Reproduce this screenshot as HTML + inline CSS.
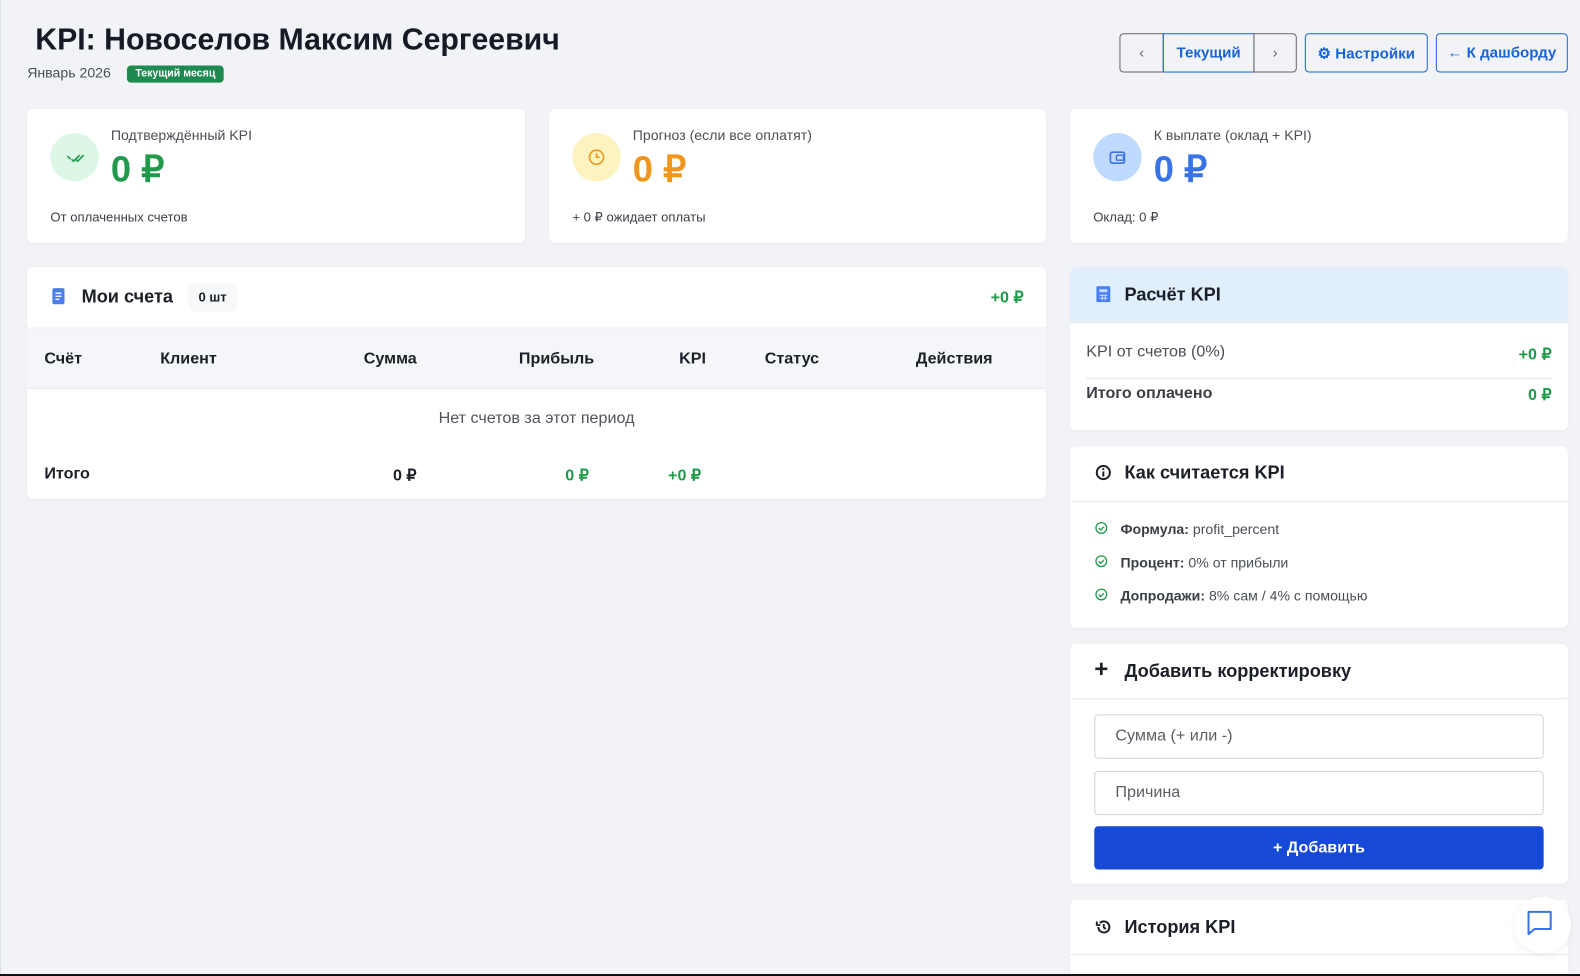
<!DOCTYPE html>
<html style="overflow:hidden;width:1580px;height:976px"><head><meta charset="utf-8"><style>
*{box-sizing:border-box;margin:0;padding:0}
body{width:1580px;height:976px;background:#f1f3f7;font-family:"Liberation Sans",sans-serif;color:#1b1f27;position:relative;overflow:hidden}
#w{position:absolute;left:0;top:0;width:1568px;height:968px;transform:scale(1.0076);transform-origin:0 0;border-left:1px solid #dde0e5;overflow:hidden}
.abs{position:absolute}
.card{position:absolute;background:#fff;border-radius:6px;box-shadow:0 1px 4px rgba(0,0,0,.04)}
h1{position:absolute;left:34px;top:23px;font-size:30px;font-weight:bold;color:#151a24}
.btn{position:absolute;top:33px;height:39px;border:1px solid #1a63d6;border-radius:4px;color:#1a63d6;font-size:15px;font-weight:bold;display:flex;align-items:center;justify-content:center;background:transparent}
.ic{position:absolute;left:23px;top:24px;width:48px;height:48px;border-radius:50%}
.lab{position:absolute;left:83px;top:18px;font-size:14px;color:#4a4f57}
.val{position:absolute;left:83px;top:39px;font-size:36px;font-weight:bold}
.sub{position:absolute;left:23px;top:100px;font-size:13px;color:#3c4048}
.th{position:absolute;top:83px;font-size:16px;font-weight:bold;color:#1b1f27}
.g{color:#1f9a4a}
.hd{position:absolute;left:0;right:0;top:0;border-bottom:1px solid #e6e8ec}
.ht{position:absolute;left:54px;font-size:18px;font-weight:bold}
.li{position:absolute;left:50px;font-size:14px;color:#4a4f57}
.li b{color:#3a3e46}
.inp{position:absolute;left:24px;width:446px;height:44px;border:1px solid #cfd3d9;border-radius:4px;font-size:16px;color:#5a5f66;padding:12px 20px}
</style></head><body><div id="w">
<h1>KPI: Новоселов Максим Сергеевич</h1>
<div class="abs" style="left:26px;top:64px;font-size:14px;color:#4a4f57">Январь 2026</div>
<div class="abs" style="left:125px;top:65px;width:96px;height:17px;background:#1e8a4f;border-radius:4px;color:#fff;font-size:10.5px;font-weight:bold;text-align:center;line-height:17px">Текущий месяц</div>

<div class="btn" style="left:1110px;width:44px;border-color:#666;border-radius:4px 0 0 4px;color:#666;font-weight:normal">‹</div>
<div class="btn" style="left:1153px;width:91px;border-radius:0">Текущий</div>
<div class="btn" style="left:1243px;width:43px;border-color:#666;border-radius:0 4px 4px 0;color:#666;font-weight:normal">›</div>
<div class="btn" style="left:1294px;width:122px">⚙ Настройки</div>
<div class="btn" style="left:1424px;width:131px">← К дашборду</div>

<div class="card" style="left:26px;top:108px;width:494px;height:133px">
<div class="ic" style="background:#dcf7e6"><svg width="48" height="48"><path d="M17 23l3 3 M21 26l2 2 6-6 M25 26l2 2 6-6" stroke="#1f9a4a" stroke-width="1.6" fill="none"/></svg></div>
<div class="lab">Подтверждённый KPI</div><div class="val g">0 ₽</div><div class="sub">От оплаченных счетов</div></div>
<div class="card" style="left:544px;top:108px;width:493px;height:133px">
<div class="ic" style="background:#fdf3c0"><svg width="48" height="48"><circle cx="24" cy="24" r="7" stroke="#f0961b" stroke-width="1.6" fill="none"/><path d="M24 20v4h3" stroke="#f0961b" stroke-width="1.6" fill="none"/></svg></div>
<div class="lab">Прогноз (если все оплатят)</div><div class="val" style="color:#f0961b">0 ₽</div><div class="sub">+ 0 ₽ ожидает оплаты</div></div>
<div class="card" style="left:1061px;top:108px;width:494px;height:133px">
<div class="ic" style="background:#bfdafd"><svg width="48" height="48"><rect x="17" y="19" width="14" height="11" rx="2" stroke="#3a73e8" stroke-width="1.6" fill="none"/><rect x="23" y="22" width="7" height="5" rx="1" stroke="#3a73e8" stroke-width="1.4" fill="none"/></svg></div>
<div class="lab">К выплате (оклад + KPI)</div><div class="val" style="color:#3a73e8">0 ₽</div><div class="sub">Оклад: 0 ₽</div></div>

<div class="card" style="left:26px;top:265px;width:1011px;height:230px;overflow:hidden">
<svg class="abs" style="left:24px;top:20px" width="14" height="18"><rect x="1" y="1" width="12" height="16" rx="2" fill="#4a7ef0"/><path d="M4 6h6M4 9h6M4 12h4" stroke="#fff" stroke-width="1.3"/></svg>
<div class="abs" style="left:54px;top:19px;font-size:18px;font-weight:bold">Мои счета</div>
<div class="abs" style="left:160px;top:16px;width:48px;height:28px;background:#f7f8fa;border-radius:6px;font-size:13px;font-weight:bold;text-align:center;line-height:28px">0 шт</div>
<div class="abs g" style="right:22px;top:20px;font-size:16px;font-weight:bold">+0 ₽</div>
<div class="abs" style="left:0;right:0;top:60px;height:61px;background:#f5f6f9;border-top:1px solid #eceef1;border-bottom:1px solid #e6e8ec"></div>
<div class="th" style="left:17px">Счёт</div><div class="th" style="left:132px">Клиент</div><div class="th" style="left:334px">Сумма</div><div class="th" style="left:488px">Прибыль</div><div class="th" style="left:647px">KPI</div><div class="th" style="left:732px">Статус</div><div class="th" style="left:882px">Действия</div>
<div class="abs" style="left:0;right:0;top:142px;text-align:center;font-size:16px;color:#50555d">Нет счетов за этот период</div>
<div class="th" style="top:197px;left:17px">Итого</div><div class="th" style="top:197px;left:363px">0 ₽</div><div class="th g" style="top:197px;left:534px">0 ₽</div><div class="th g" style="top:197px;left:636px">+0 ₽</div>
</div>

<div class="card" style="left:1061px;top:265px;width:494px;height:162px;overflow:hidden">
<div class="hd" style="height:56px;background:#e1effd"></div>
<svg class="abs" style="left:26px;top:19px" width="14" height="16"><rect x="0" y="0" width="14" height="16" rx="1.5" fill="#4a7ef0"/><rect x="3" y="3" width="8" height="3" fill="#c7d9fb"/><path d="M3 9h8M3 12h8M6 8v6M9 8v6" stroke="#c7d9fb" stroke-width="1"/></svg>
<div class="ht" style="top:17px">Расчёт KPI</div>
<div class="abs" style="left:16px;top:76px;font-size:16px;color:#4a4f57">KPI от счетов (0%)</div>
<div class="abs g" style="right:16px;top:77px;font-size:16px;font-weight:bold">+0 ₽</div>
<div class="abs" style="left:16px;right:16px;top:110px;border-top:1px solid #e3e5e9"></div>
<div class="abs" style="left:16px;top:117px;font-size:16px;font-weight:bold;color:#3a3e46">Итого оплачено</div>
<div class="abs g" style="right:16px;top:117px;font-size:16px;font-weight:bold">0 ₽</div>
</div>

<div class="card" style="left:1061px;top:443px;width:494px;height:180px">
<div class="hd" style="height:55px"></div>
<svg class="abs" style="left:25px;top:18px" width="16" height="16"><circle cx="8" cy="8" r="6.5" stroke="#1b1f27" stroke-width="2" fill="none"/><path d="M8 7v5" stroke="#1b1f27" stroke-width="2"/><circle cx="8" cy="4.6" r="1.1" fill="#1b1f27"/></svg>
<div class="ht" style="top:16px">Как считается KPI</div>
<svg class="abs" style="left:24px;top:74px" width="14" height="80"><g stroke="#1f9a4a" stroke-width="1.3" fill="none"><circle cx="7" cy="7" r="5.3"/><path d="M4.5 7l2 2 3-3.3"/><circle cx="7" cy="40" r="5.3"/><path d="M4.5 40l2 2 3-3.3"/><circle cx="7" cy="73" r="5.3"/><path d="M4.5 73l2 2 3-3.3"/></g></svg>
<div class="li" style="top:74px"><b>Формула:</b> profit_percent</div>
<div class="li" style="top:107px"><b>Процент:</b> 0% от прибыли</div>
<div class="li" style="top:140px"><b>Допродажи:</b> 8% сам / 4% с помощью</div>
</div>

<div class="card" style="left:1061px;top:639px;width:494px;height:238px">
<div class="hd" style="height:55px"></div>
<div class="abs" style="left:24px;top:12px;font-size:24px;font-weight:bold">+</div>
<div class="ht" style="top:17px">Добавить корректировку</div>
<div class="inp" style="top:70px">Сумма (+ или -)</div>
<div class="inp" style="top:126px">Причина</div>
<div class="abs" style="left:24px;top:181px;width:446px;height:43px;background:#1649d6;border-radius:4px;color:#fff;font-size:16px;font-weight:bold;text-align:center;line-height:43px">+ Добавить</div>
</div>

<div class="card" style="left:1061px;top:893px;width:494px;height:90px">
<div class="hd" style="height:55px"></div>
<svg class="abs" style="left:25px;top:19px" width="16" height="16"><path d="M3 8a5.5 5.5 0 1 0 1.6-3.9" stroke="#1b1f27" stroke-width="2" fill="none"/><path d="M1.5 2.5v3.5h3.5" stroke="#1b1f27" stroke-width="1.8" fill="none"/><path d="M8.5 5v3.5l2 1.5" stroke="#1b1f27" stroke-width="1.8" fill="none"/></svg>
<div class="ht" style="top:17px">История KPI</div>
</div>
<div class="abs" style="left:1502px;top:890px;width:56px;height:56px;border-radius:50%;background:#fff;box-shadow:0 2px 8px rgba(0,0,0,.06)"></div>
<svg class="abs" style="left:1514px;top:903px" width="28" height="26"><path d="M2 2h22v17H8l-6 5z" stroke="#3a73e8" stroke-width="2" fill="none" stroke-linejoin="round"/></svg>
</div>
<div class="abs" style="left:0;top:974px;width:1580px;height:2px;background:#111"></div>
</body></html>
